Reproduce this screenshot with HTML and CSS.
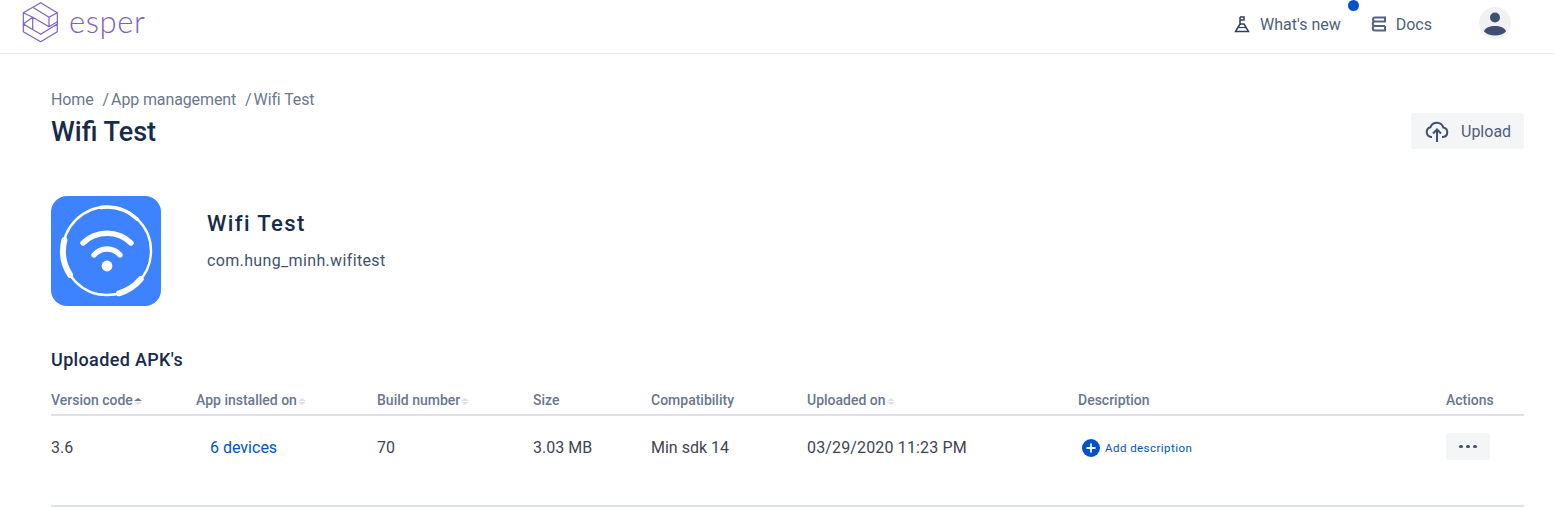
FILE: index.html
```html
<!DOCTYPE html>
<html lang="en">
<head>
    <meta charset="UTF-8">
    <title>Wifi Test</title>
    <link rel="stylesheet" href="styles.css">
</head>
<body>
    <header class="topbar">
        <a class="logo">
            <svg class="logo-mark" viewBox="22 1 37 42" width="37" height="42">
                <path d="M40.7 2.7L57.3 12.7V31.7L40.7 41.7L23.3 31.7V12.7ZM32.7 7.3L49 17.3L57.3 12.7M49 17.3V26.7M23.3 24L32.7 17.3L49 26.7L57.3 21.7M23.3 24L40.7 34.3L57.3 24M32.7 17.3V29M23.3 12.7L32.7 17.3" fill="none" stroke="#7e61c0" stroke-width="1.2" stroke-linejoin="round"/>
            </svg>
            <span class="logo-text">esper</span>
        </a>
        <nav class="topnav">
            <a class="nav-link news">
                <svg class="nav-icon" viewBox="0 0 16 18" width="16" height="18">
                    <path d="M6 9V2M6 2H10V5H6M6 9L1.5 16.5H14.5L10 9H6" fill="none" stroke="#33415f" stroke-width="1.5"/>
                    <path d="M3.5 12.5H12.5" stroke="#33415f" stroke-width="1.2"/>
                </svg>
                What's new
                <span class="dot"></span>
            </a>
            <a class="nav-link docs">
                <svg class="nav-icon" viewBox="0 0 16 16" width="16" height="16">
                    <path d="M5 1.5H15V5.5H5A2 2 0 0 1 5 1.5ZM15 5.5H5A2.2 2.2 0 0 0 5 10H15M5 10A2.2 2.2 0 0 0 5 14.5H15V10" fill="none" stroke="#56637f" stroke-width="2"/>
                </svg>
                Docs
            </a>
            <span class="avatar">
                <svg viewBox="0 0 32 32" width="32" height="32">
                    <circle cx="16" cy="10.5" r="5" fill="#3f4f70"/>
                    <path d="M5 24.5C6 20.5 11 19 16 19S26 20.5 27 24.5C24.5 27 20.5 28.5 16 28.5S7.5 27 5 24.5Z" fill="#3f4f70"/>
                </svg>
            </span>
        </nav>
    </header>

    <main class="content">
        <div class="title-row">
            <div>
                <div class="breadcrumb">
                    <a>Home</a>
                    <a><span class="slash">/</span>App management</a>
                    <a><span class="slash">/</span>Wifi Test</a>
                </div>
                <h1 class="page-title">Wifi Test</h1>
            </div>
            <button class="upload-btn">
                <svg viewBox="0 0 24 22" width="24" height="22">
                    <path d="M7 16H6A5 5 0 0 1 5.5 6.2A6.8 6.8 0 0 1 18.3 6.5A4.8 4.8 0 0 1 18 16H17" fill="none" stroke="#3f4f70" stroke-width="2"/>
                    <path d="M12 21V9M8 12.5L12 8.5L16 12.5" fill="none" stroke="#3f4f70" stroke-width="2"/>
                </svg>
                Upload
            </button>
        </div>

        <section class="app-info">
            <svg class="app-icon" viewBox="0 0 110 110" width="110" height="110">
                <rect width="110" height="110" rx="16" fill="#3d82ff"/>
                <circle cx="56" cy="55" r="44" fill="none" stroke="#fff" stroke-width="2.4"/>
                <path d="M50 11.4A44 44 0 0 1 86 23" fill="none" stroke="#fff" stroke-width="3.6" stroke-linecap="round"/>
                <path d="M13.4 44A44 44 0 0 0 19.1 78.9" fill="none" stroke="#fff" stroke-width="6" stroke-linecap="round"/>
                <path d="M68.1 97.3A44 44 0 0 0 89.7 83.2" fill="none" stroke="#fff" stroke-width="6" stroke-linecap="round"/>
                <path d="M32 47C45 34 67 34 80 47" fill="none" stroke="#fff" stroke-width="5.4" stroke-linecap="round"/>
                <path d="M43 59C50 51 62 51 69 59" fill="none" stroke="#fff" stroke-width="5.4" stroke-linecap="round"/>
                <circle cx="56" cy="70" r="5.4" fill="#fff"/>
            </svg>
            <div class="app-meta">
                <h2 class="app-name">Wifi Test</h2>
                <div class="app-package">com.hung_minh.wifitest</div>
            </div>
        </section>

        <h3 class="section-title">Uploaded APK's</h3>
        <table class="apk-table">
            <colgroup>
                <col class="c1"><col class="c2"><col class="c3"><col class="c4">
                <col class="c5"><col class="c6"><col class="c7"><col class="c8">
            </colgroup>
            <thead>
                <tr>
                    <th>Version code<span class="sort"><i class="up active"></i><i class="down"></i></span></th>
                    <th>App installed on<span class="sort"><i class="up"></i><i class="down"></i></span></th>
                    <th>Build number<span class="sort"><i class="up"></i><i class="down"></i></span></th>
                    <th>Size</th>
                    <th>Compatibility</th>
                    <th>Uploaded on<span class="sort"><i class="up"></i><i class="down"></i></span></th>
                    <th>Description</th>
                    <th>Actions</th>
                </tr>
            </thead>
            <tbody>
                <tr>
                    <td>3.6</td>
                    <td><a class="devices">6 devices</a></td>
                    <td>70</td>
                    <td>3.03 MB</td>
                    <td>Min sdk 14</td>
                    <td class="date">03/29/2020 11:23 PM</td>
                    <td>
                        <a class="add-desc">
                            <svg viewBox="0 0 18 18" width="18" height="18">
                                <circle cx="9" cy="9" r="9" fill="#0052cc"/>
                                <path d="M9 4.5V13.5M4.5 9H13.5" stroke="#fff" stroke-width="1.8"/>
                            </svg>
                            Add description
                        </a>
                    </td>
                    <td><button class="more-btn"><i></i><i></i><i></i></button></td>
                </tr>
            </tbody>
        </table>
    </main>
</body>
</html>
```

FILE: styles.css
```css
* {
    box-sizing: border-box;
}
body {
    margin: 0;
    font-family: Roboto, "Liberation Sans", sans-serif;
    font-size: 16px;
    color: #172b4d;
    background-color: #fff;
    overflow: hidden;
}
.topbar {
    display: flex;
    justify-content: space-between;
    height: 54px;
    padding: 1px 44px 0 22px;
    border-bottom: 1px solid #ebecf0;
}
.logo {
    display: flex;
    align-items: flex-start;
    height: 44px;
}
.logo-text {
    margin: -1px 0 0 10px;
    font-family: Lato, sans-serif;
    font-weight: 300;
    font-size: 31px;
    line-height: 42px;
    letter-spacing: 0.6px;
    color: #7e61c0;
}
.topnav {
    display: flex;
    align-items: flex-start;
    color: #505f79;
}
.nav-link {
    position: relative;
    display: flex;
    align-items: center;
    height: 46px;
}
.nav-icon {
    margin-right: 10px;
}
.news {
    margin-right: 29px;
}
.docs {
    margin-right: 47px;
}
.dot {
    position: absolute;
    top: -1px;
    right: -18px;
    width: 11px;
    height: 11px;
    border-radius: 50%;
    background-color: #0052cc;
}
.avatar {
    display: block;
    width: 32px;
    height: 32px;
    margin-top: 6px;
    border-radius: 50%;
    background-color: #f1f1f3;
}
.content {
    padding: 36px 31px 0 51px;
}
.title-row {
    display: flex;
    justify-content: space-between;
}
.breadcrumb {
    display: flex;
    gap: 9px;
    line-height: 20px;
    letter-spacing: -0.12px;
    color: #6b778c;
}
.slash {
    margin-right: 2px;
}
.page-title {
    margin: 4px 0 0;
    font-size: 27px;
    line-height: 36px;
    font-weight: 500;
}
.upload-btn {
    display: flex;
    align-items: center;
    gap: 12px;
    width: 113px;
    height: 36px;
    margin-top: 23px;
    padding: 1px 0 0 14px;
    border: 0;
    border-radius: 3px;
    background-color: #f4f5f7;
    font: inherit;
    color: #505f79;
}
.app-info {
    display: flex;
    margin-top: 46px;
}
.app-icon {
    display: block;
}
.app-meta {
    margin: 13px 0 0 46px;
}
.app-name {
    margin: 0;
    font-size: 22px;
    line-height: 30px;
    font-weight: 500;
    letter-spacing: 1.4px;
}
.app-package {
    margin-top: 10px;
    line-height: 24px;
    letter-spacing: 0.35px;
    color: #42526e;
}
.section-title {
    margin: 43px 0 0;
    font-size: 18px;
    line-height: 22px;
    font-weight: 500;
    letter-spacing: 0.35px;
}
.apk-table {
    width: 100%;
    margin-top: 12px;
    border-collapse: collapse;
    table-layout: fixed;
}
.c1 { width: 145px; }
.c2 { width: 181px; }
.c3 { width: 156px; }
.c4 { width: 118px; }
.c5 { width: 156px; }
.c6 { width: 271px; }
.c7 { width: 368px; }
.c8 { width: 78px; }
.apk-table th {
    height: 32px;
    padding: 2px 0 0;
    text-align: left;
    font-size: 14px;
    font-weight: 500;
    color: #6b778c;
    border-bottom: 2px solid #dfe1e6;
}
.apk-table td {
    height: 91px;
    padding: 0 0 27px;
    color: #3f4452;
    border-bottom: 2px solid #dfe1e6;
}
.apk-table .date {
    letter-spacing: 0.15px;
}
.sort {
    display: inline-block;
    width: 8px;
    margin-left: 1px;
    vertical-align: 0;
}
.sort i {
    display: block;
    width: 0;
    height: 0;
    border-left: 4px solid transparent;
    border-right: 4px solid transparent;
}
.sort .up {
    margin-bottom: 1px;
    border-bottom: 3.5px solid #dfe1e6;
}
.sort .down {
    border-top: 3.5px solid #dfe1e6;
}
.sort .up.active {
    border-bottom-color: #6b778c;
}
.devices {
    margin-left: 14px;
    color: #0052cc;
}
.add-desc {
    display: flex;
    align-items: center;
    gap: 5px;
    margin: 1px 0 0 4px;
    font-size: 11.5px;
    letter-spacing: 0.45px;
    color: #0052cc;
}
.more-btn {
    display: flex;
    align-items: center;
    justify-content: center;
    gap: 3.5px;
    width: 44px;
    height: 27px;
    margin-bottom: 1px;
    padding: 0;
    border: 0;
    border-radius: 3px;
    background-color: #f4f5f7;
}
.more-btn i {
    width: 3.5px;
    height: 3.5px;
    border-radius: 50%;
    background-color: #42526e;
}
```
